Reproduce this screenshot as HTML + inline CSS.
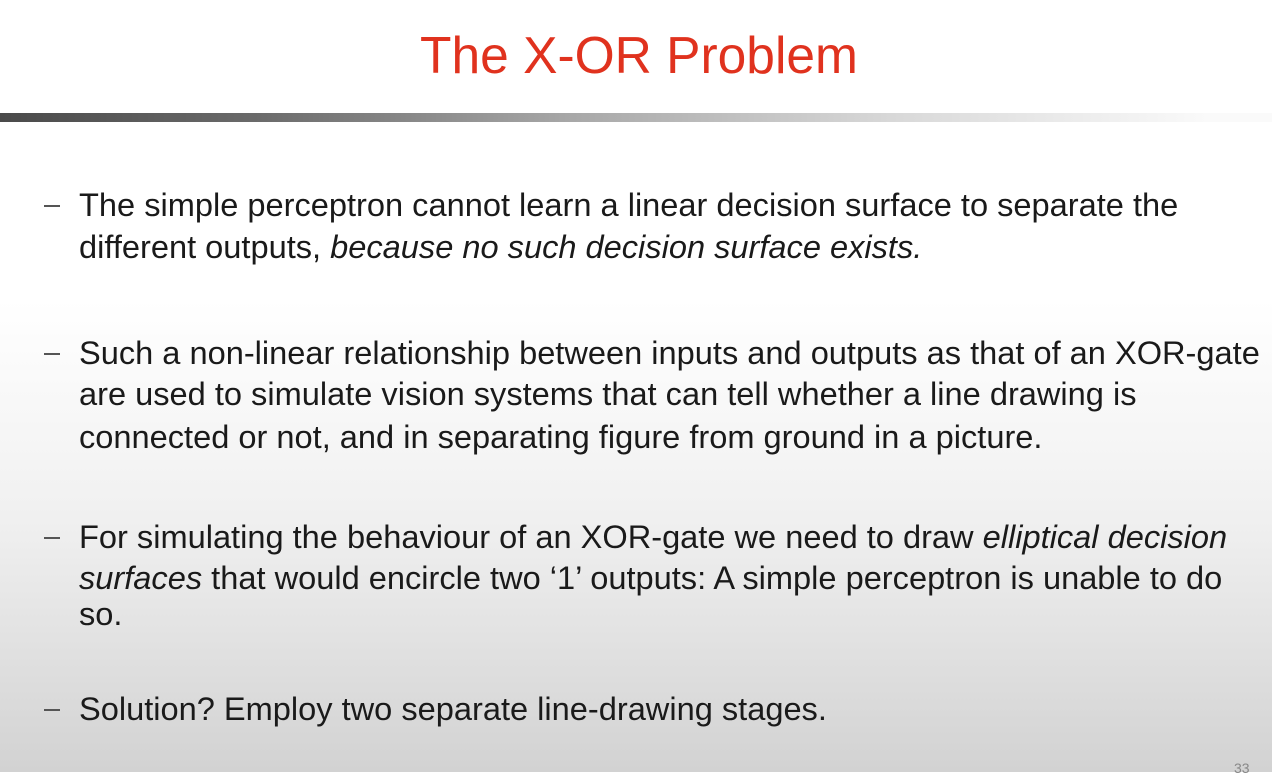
<!DOCTYPE html>
<html><head><meta charset="utf-8"><style>
html,body{margin:0;padding:0}
body{width:1272px;height:772px;overflow:hidden;position:relative;font-family:"Liberation Sans",sans-serif;
background:linear-gradient(to bottom,#ffffff 0px,#ffffff 300px,#f0f0f0 520px,#d2d2d2 772px);}
.title{position:absolute;left:0;width:1278px;top:22px;text-align:center;color:#e0321e;font-size:51.5px;line-height:66px;}
.bar{position:absolute;left:0;top:113px;width:1272px;height:9px;background:linear-gradient(to right,#4a4a4a 0%,#6a6a6a 20%,#a8a8a8 45%,#d8d8d8 70%,#fafafa 95%);}
.l{position:absolute;left:79px;font-size:32.6px;line-height:38px;color:#1a1a1a;white-space:nowrap;}
.d{position:absolute;left:44px;width:16px;height:2px;background:#555;}
.pn{position:absolute;left:1234px;top:760px;font-size:14px;color:#888;}
</style></head><body>
<div class="title">The X-OR Problem</div>
<div class="bar"></div>
<div class="d" style="top:205px"></div>
<div class="l" style="top:186px">The simple perceptron cannot learn a linear decision surface to separate the</div>
<div class="l" style="top:228px">different outputs, <i>because no such decision surface exists.</i></div>
<div class="d" style="top:353px"></div>
<div class="l" style="top:334px">Such a non-linear relationship between inputs and outputs as that of an XOR-gate</div>
<div class="l" style="top:375px">are used to simulate vision systems that can tell whether a line drawing is</div>
<div class="l" style="top:418px">connected or not, and in separating figure from ground in a picture.</div>
<div class="d" style="top:537px"></div>
<div class="l" style="top:518px">For simulating the behaviour of an XOR-gate we need to draw <i>elliptical decision</i></div>
<div class="l" style="top:559px"><i>surfaces</i> that would encircle two ‘1’ outputs: A simple perceptron is unable to do</div>
<div class="l" style="top:595px">so.</div>
<div class="d" style="top:709px"></div>
<div class="l" style="top:690px">Solution? Employ two separate line-drawing stages.</div>
<div class="pn">33</div>
</body></html>
